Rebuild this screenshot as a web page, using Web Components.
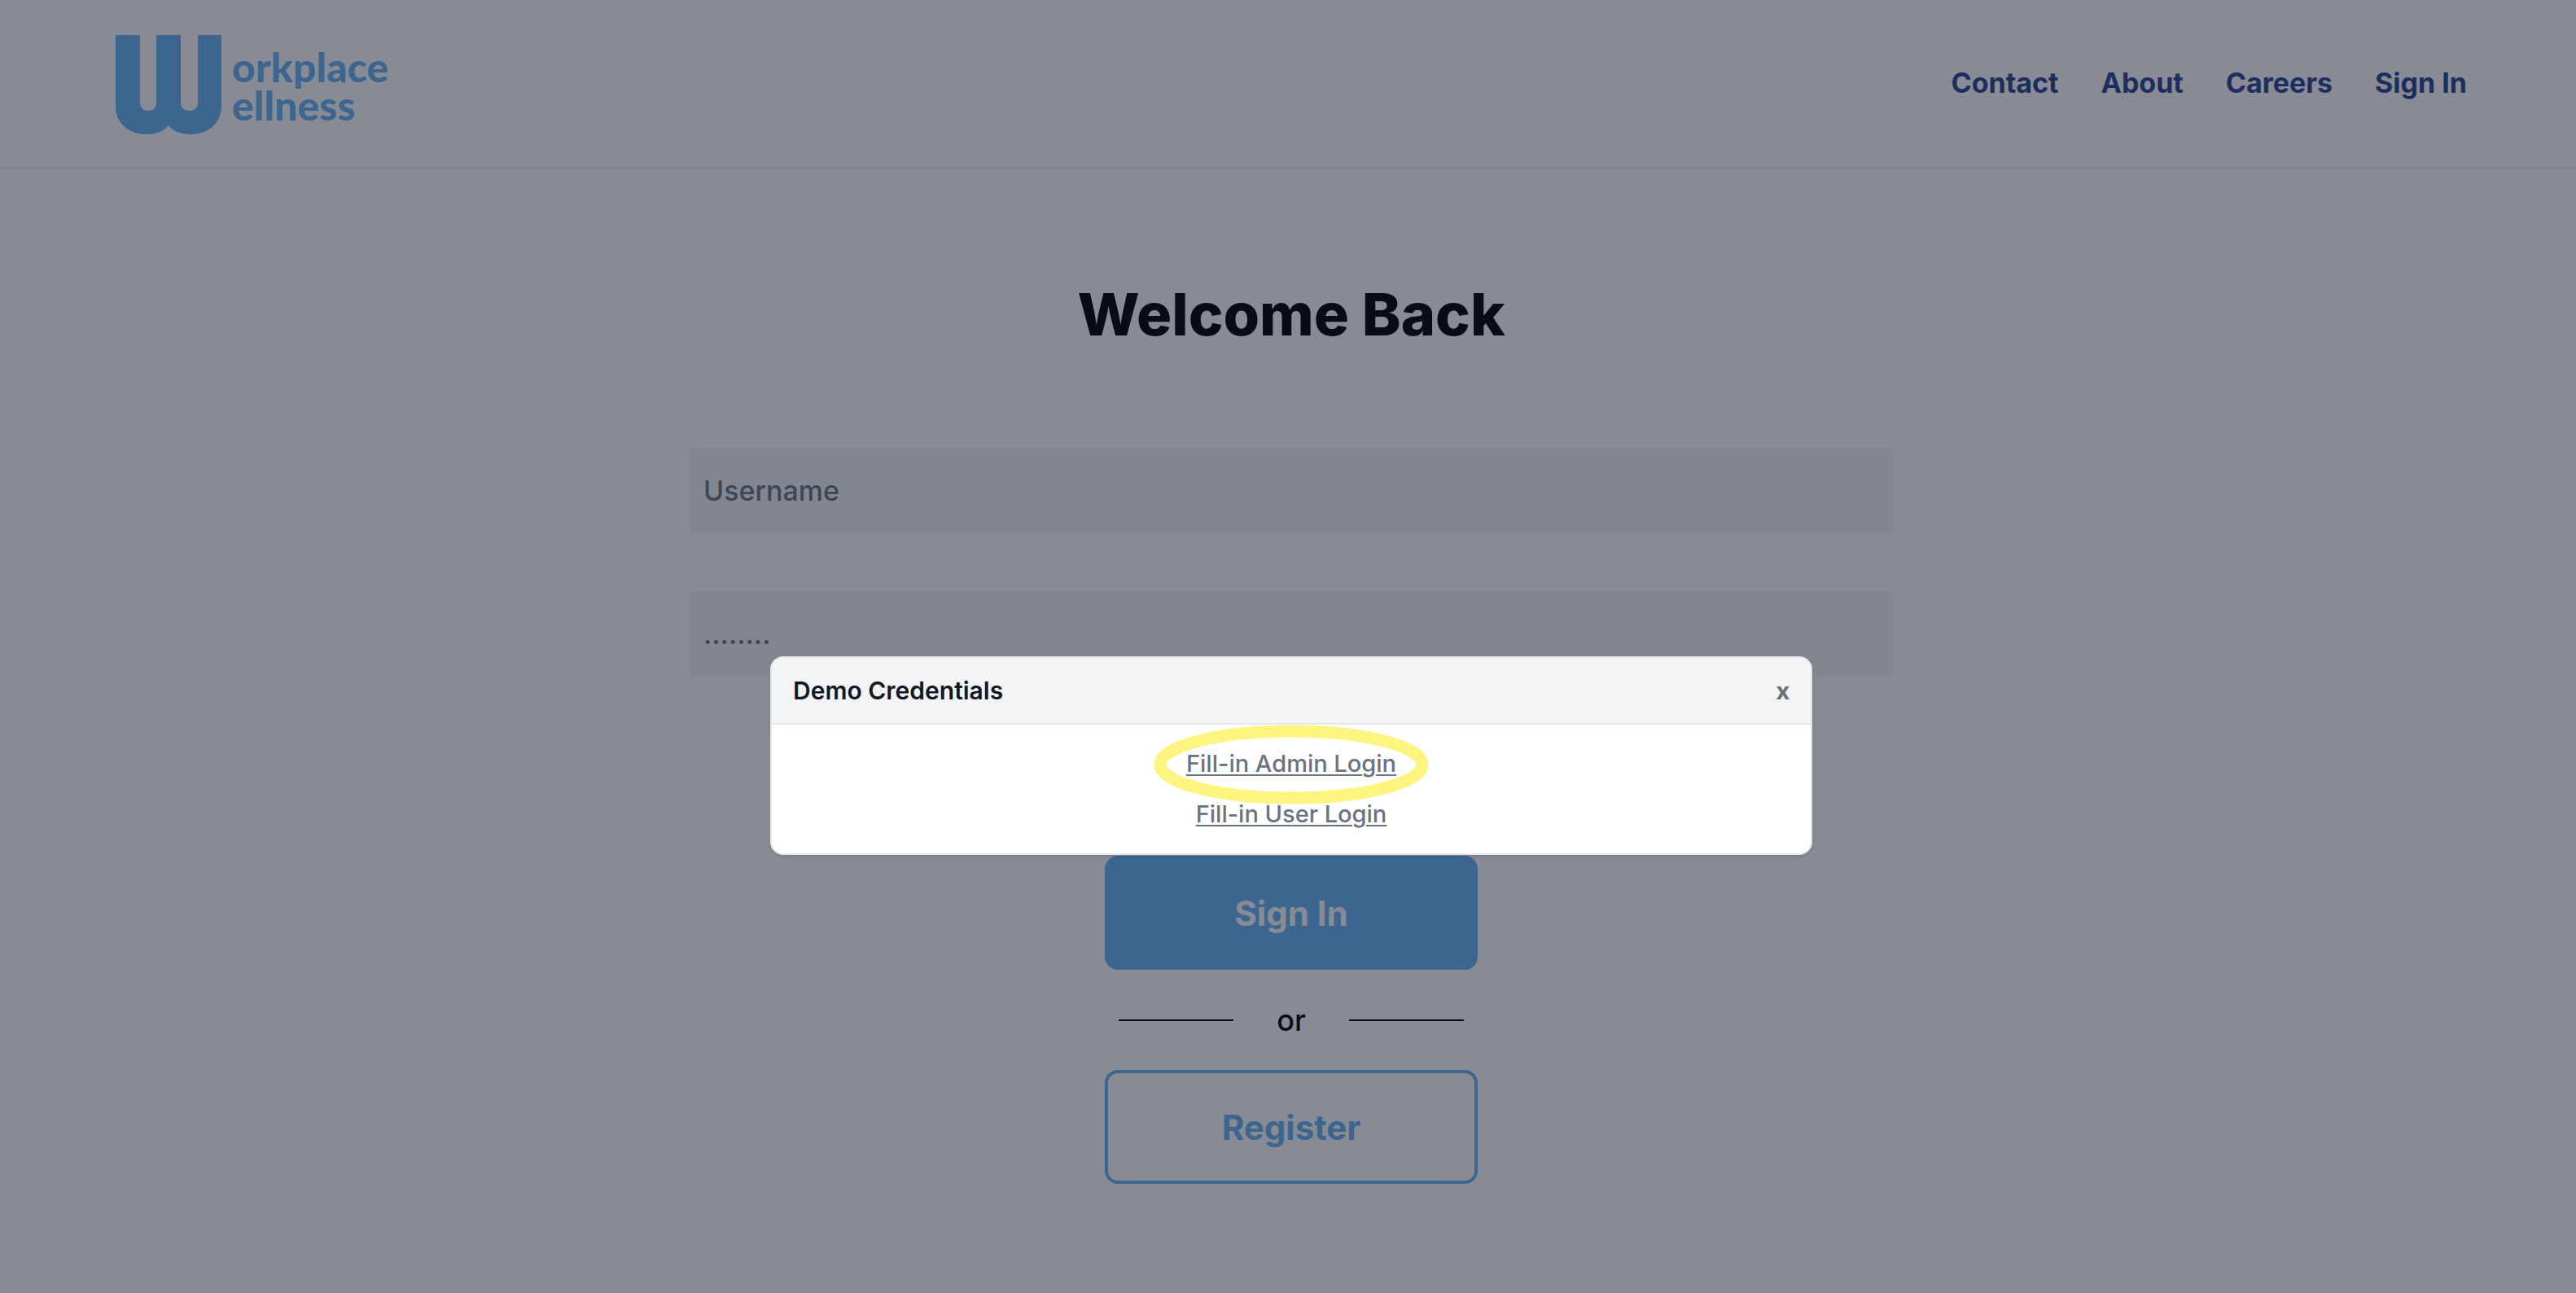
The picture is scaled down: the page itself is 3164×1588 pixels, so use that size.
<!DOCTYPE html>
<html lang="en">
<head>
<meta charset="utf-8">
<meta name="viewport" content="width=device-width, initial-scale=1">
<title>Workplace Wellness</title>
<style>
  :root {
    --brand: #66b4f9;
    --navy: #264297;
    --ink: #111827;
    --muted: #6b7280;
    --line: #e5e7eb;
    --soft: #f3f4f6;
  }
  body {
    margin: 0;
    min-height: 100vh;
    background: #fff;
    color: #000;
    font-family: Inter, "Liberation Sans", sans-serif;
    font-size: 34px;
    line-height: 48px;
  }
</style>
</head>
<body>
<sign-in-page></sign-in-page>
<script>
const define = (name, html) => {
  const template = document.createElement('template');
  template.innerHTML = html;
  customElements.define(name, class extends HTMLElement {
    constructor() {
      super();
      this.attachShadow({ mode: 'open' }).append(template.content.cloneNode(true));
    }
    connectedCallback() {
      const input = this.shadowRoot.querySelector('input');
      if (input) {
        input.type = this.getAttribute('type') || 'text';
        input.placeholder = this.getAttribute('placeholder') || '';
        input.setAttribute('aria-label', this.getAttribute('label') || '');
      }
    }
  });
};

define('brand-logo', `
  <style>
    :host { display: block; color: var(--brand); }
    a { display: flex; align-items: flex-start; gap: 13px; color: inherit; text-decoration: none; }
    svg { display: block; width: 130px; height: 123px; fill: currentColor; }
    .words { display: flex; flex-direction: column; padding-top: 16px;
      font: 900 50px/47px Lato, sans-serif; }
  </style>
  <a href="#" aria-label="Workplace Wellness">
    <svg viewBox="0 0 130 123" aria-hidden="true">
      <path d="M0 0H30V82Q30 93 40 93Q50 93 50 82V0H80V82Q80 93 90.500 93Q101 93 101 82V0H130V88C130 108 114 122 92 122C80 122 70 118 65 111C60 118 50 122 38 122C16 122 0 108 0 88Z"/>
    </svg>
    <span class="words"><span>orkplace</span><span>ellness</span></span>
  </a>`);

define('site-header', `
  <style>
    :host { display: flex; justify-content: space-between; align-items: flex-start;
      padding: 43px 134px 39px 142px; border-bottom: 2px solid var(--line); }
    nav { display: flex; gap: 52px; padding-top: 35px; }
    ::slotted(a) { color: var(--navy); font-weight: 700; text-decoration: none; }
  </style>
  <brand-logo></brand-logo>
  <nav><slot></slot></nav>`);

define('text-field', `
  <style>
    :host { display: block; }
    input { display: block; box-sizing: border-box; width: 100%; height: 105px; padding: 0 17px;
      border: 0; border-radius: 8px; background: var(--soft); color: var(--ink);
      font: inherit; font-weight: 500; }
    input::placeholder { color: var(--muted); opacity: 1; }
  </style>
  <input>`);

define('action-button', `
  <style>
    :host { display: block; }
    button { width: 100%; height: 140px; border: 4px solid var(--brand); border-radius: 16px;
      padding: 2px 0 0; background: var(--brand); color: #fff; font: bold 42px/56px Inter, sans-serif; }
    :host([outline]) button { background: transparent; color: var(--brand); }
  </style>
  <button type="button"><slot></slot></button>`);

define('or-divider', `
  <style>
    :host { display: flex; align-items: center; padding: 0 17px; font-size: 36px; font-weight: 500; }
    hr { flex: 1; margin: 0; border: 0; border-top: 2px solid #000; }
    span { width: 142px; text-align: center; }
  </style>
  <hr><span><slot></slot></span><hr>`);

define('sign-in-form', `
  <style>
    :host { display: flex; flex-direction: column; align-items: center; padding: 131px 32px 134px 40px; }
    h1 { margin: 0; font-size: 72px; line-height: 96px; font-weight: 800; }
    form { display: flex; flex-direction: column; align-items: center; width: 100%; padding-top: 116px; }
    .fields { display: flex; flex-direction: column; gap: 71px; width: 100%; max-width: 1478px; }
    .actions { display: flex; flex-direction: column; gap: 37px; width: 458px; padding-top: 220px; }
    or-divider { height: 49px; }
  </style>
  <h1>Welcome Back</h1>
  <form>
    <div class="fields">
      <text-field label="Username" placeholder="Username"></text-field>
      <text-field label="Password" type="password" placeholder="........"></text-field>
    </div>
    <div class="actions">
      <action-button>Sign In</action-button>
      <or-divider>or</or-divider>
      <action-button outline>Register</action-button>
    </div>
  </form>`);

define('credentials-dialog', `
  <style>
    :host { position: absolute; inset: 0; display: flex; justify-content: center; align-items: flex-start;
      padding: 806px 32px 0 40px; background: rgb(17 24 39 / 50%); font-size: 29px; line-height: 40px; }
    section { box-sizing: border-box; width: 100%; max-width: 1280px; border: 2px solid var(--line);
      border-radius: 16px; background: #fff; overflow: hidden; box-shadow: 0 2px 4px rgb(0 0 0 / 10%); }
    header { display: flex; justify-content: space-between; align-items: center; padding: 20px 26px;
      border-bottom: 2px solid var(--line); background: var(--soft); }
    h2 { margin: 0; font-size: 30px; line-height: 40px; font-weight: 600; color: var(--ink); }
    button { padding: 0; border: 0; background: none; color: var(--muted); font: bold 28px/36px "Open Sans", sans-serif; }
    .choices { display: flex; flex-direction: column; align-items: center; gap: 22px; padding: 28px 0; }
    .choices a { color: var(--muted); font-weight: 500; text-decoration: underline;
      text-decoration-thickness: 2px; text-underline-offset: 3px; }
    .marked { position: relative; }
    .marked svg { position: absolute; left: 50%; top: 50%; width: 338px; height: 98px;
      margin: -48px 0 0 -169px; pointer-events: none; }
  </style>
  <section role="dialog" aria-label="Demo Credentials">
    <header><h2>Demo Credentials</h2><button type="button" aria-label="Close">x</button></header>
    <div class="choices">
      <span class="marked">
        <a href="#">Fill-in Admin Login</a>
        <svg viewBox="0 0 338 98" aria-hidden="true"><ellipse cx="169" cy="49" rx="161" ry="41" fill="none" stroke="#fef580" stroke-width="15"/></svg>
      </span>
      <a href="#">Fill-in User Login</a>
    </div>
  </section>`);

define('sign-in-page', `
  <style>
    :host { display: block; position: relative; min-height: 100vh; }
  </style>
  <site-header>
    <a href="#">Contact</a><a href="#">About</a><a href="#">Careers</a><a href="#">Sign In</a>
  </site-header>
  <main><sign-in-form></sign-in-form></main>
  <credentials-dialog></credentials-dialog>`);
</script>
</body>
</html>
